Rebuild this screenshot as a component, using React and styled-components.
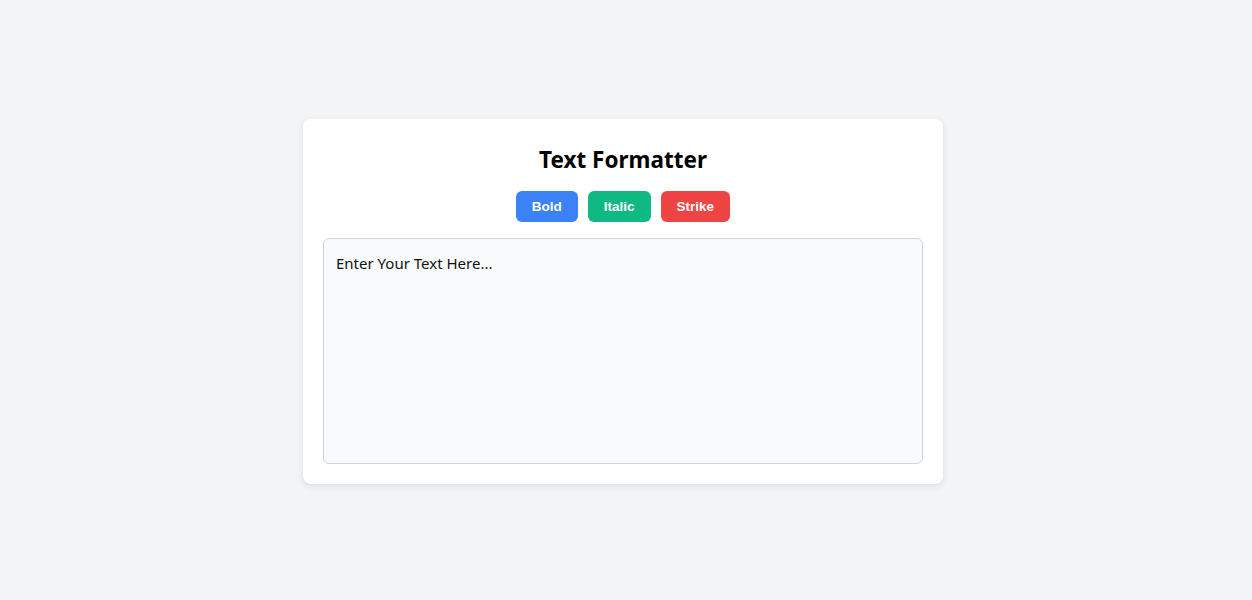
import React from 'react'
import styled, { createGlobalStyle } from 'styled-components'

const GlobalStyle = createGlobalStyle`
  body {
    margin: 0;
    background-color: #f3f4f6;
    font-family: "Noto Sans", "Open Sans", sans-serif;
  }
`;

const Page = styled.div`
  min-height: 100vh;
  box-sizing: border-box;
  padding: 2px 6px 0 0;
  display: flex;
  align-items: center;
  justify-content: center;
`;

const Card = styled.div`
  width: 640px;
  box-sizing: border-box;
  padding: 20px;
  background-color: #ffffff;
  border-radius: 8px;
  box-shadow: 0 2px 6px rgba(0, 0, 0, 0.1);
  display: flex;
  flex-direction: column;
  align-items: center;
`;

const Title = styled.h2`
  margin: 5px 0 15px;
  font-size: 22.5px;
  line-height: 32px;
  font-weight: 700;
  color: #000;
`;

const Toolbar = styled.div`
  display: flex;
  gap: 10px;
  margin-bottom: 16px;
`;

const Button = styled.button`
  border: none;
  border-radius: 6px;
  padding: 8px 16px;
  font-family: "Liberation Sans", Arial, sans-serif;
  font-weight: 700;
  font-size: 13.5px;
  line-height: 15px;
  color: #fff;
  background-color: ${p => p.$color};
  cursor: pointer;
`;

const Editor = styled.div`
  width: 100%;
  height: 226px;
  box-sizing: border-box;
  padding: 12px;
  border: 1px solid #d1d5db;
  border-radius: 6px;
  background-color: #f9fafb;
  font-size: 15px;
  line-height: 24px;
  color: #111;
`;

export default function App() {
  return (
    <>
      <GlobalStyle />
      <Page>
        <Card>
          <Title>Text Formatter</Title>
          <Toolbar>
            <Button $color="#3b82f6">Bold</Button>
            <Button $color="#10b981">Italic</Button>
            <Button $color="#ef4444">Strike</Button>
          </Toolbar>
          <Editor contentEditable suppressContentEditableWarning>
            Enter Your Text Here...
          </Editor>
        </Card>
      </Page>
    </>
  )
}
